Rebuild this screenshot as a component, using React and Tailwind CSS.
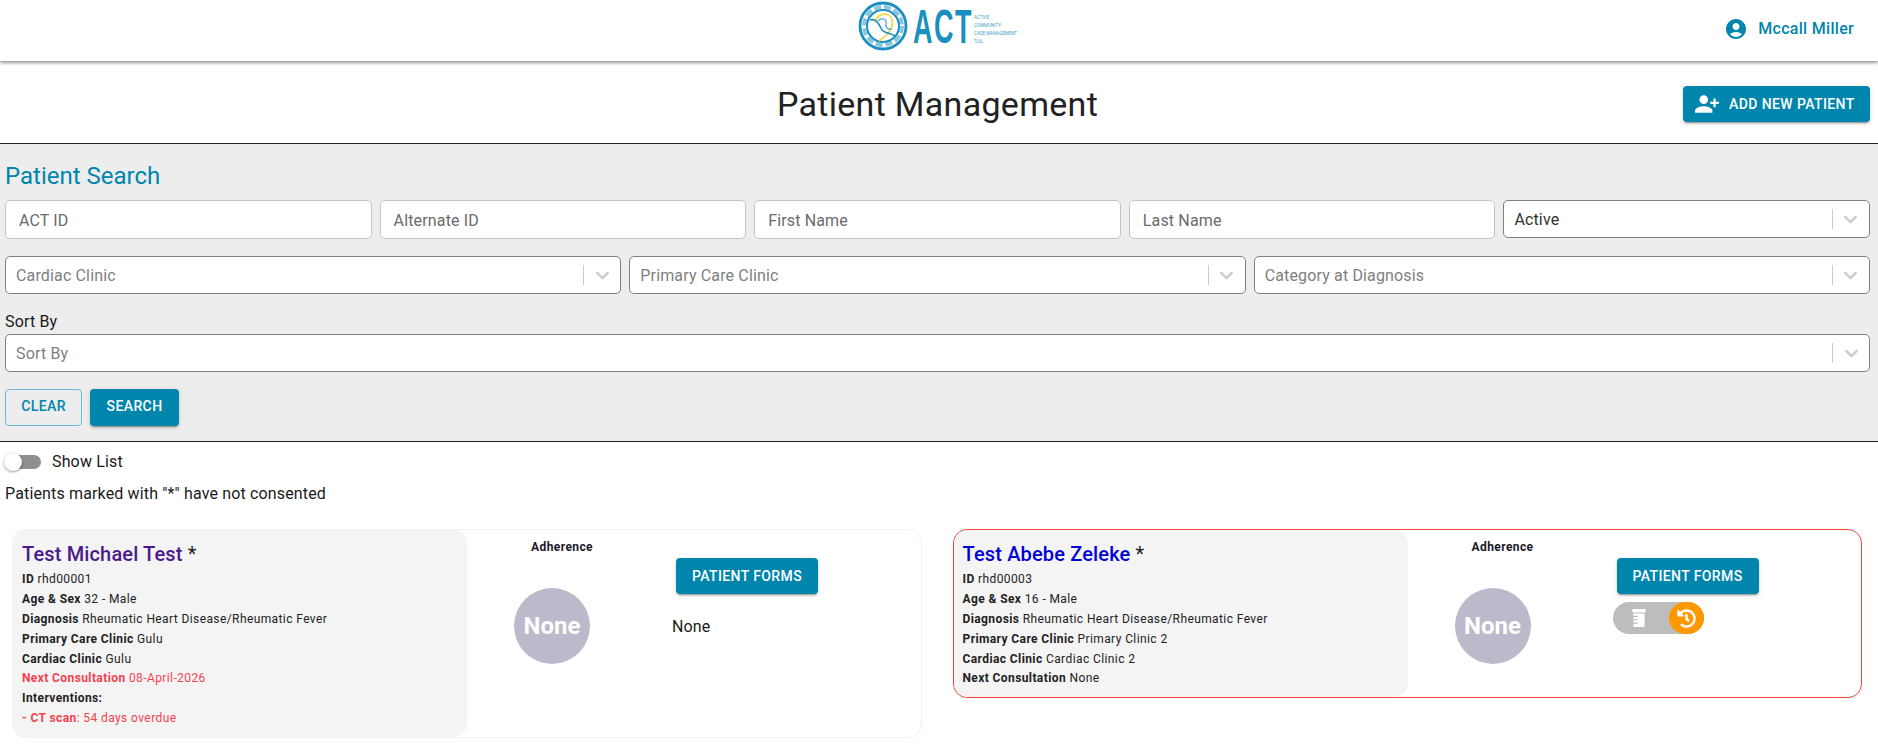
import React from "react";
import { ChevronDown } from "lucide-react";
import { MdAccountCircle, MdPersonAdd } from "react-icons/md";
import { FaHistory, FaPrescriptionBottle } from "react-icons/fa";

const btnShadow = "shadow-[0_3px_1px_-2px_rgba(0,0,0,0.2),0_2px_2px_0_rgba(0,0,0,0.14),0_1px_5px_0_rgba(0,0,0,0.12)]";

const Logo = () => (
  <svg width="160" height="52" viewBox="0 0 160 52" className="mt-[-10px] overflow-visible">
    <circle cx="24" cy="26" r="23" fill="none" stroke="#1a8fc0" strokeWidth="2.8" />
    <circle cx="24" cy="26" r="19" fill="none" stroke="#8cc6de" strokeWidth="4" strokeDasharray="7 3" />
    <circle cx="24" cy="26" r="16" fill="none" stroke="#1a8fc0" strokeWidth="2" />
    <path d="M16 22 C19 12 31 12 33 20 C35 28 27 36 20 41" fill="none" stroke="#f4d84a" strokeWidth="1.8" />
    <path d="M11 20 C17 18 20 24 23 30 C27 34 32 33 36 36" fill="none" stroke="#1a8fc0" strokeWidth="1.6" />
    <path d="M19 21 C23 17 28 19 27 24 C26 28 30 30 33 29" fill="none" stroke="#5fb2d6" strokeWidth="1.4" />
    <text x="54" y="43.5" transform="translate(54 43.5) scale(1 1.76) translate(-54 -43.5)" fontFamily="'Liberation Sans', sans-serif" fontSize="27" fontWeight="700" letterSpacing="1.5" fill="#1a8fc0">ACT</text>
    <g fontFamily="Roboto, sans-serif" fontSize="5" fill="#3f9fc8">
      <text x="115" y="19" textLength="15" lengthAdjust="spacingAndGlyphs">ACTIVE</text>
      <text x="115" y="27" textLength="27" lengthAdjust="spacingAndGlyphs">COMMUNITY</text>
      <text x="115" y="35" textLength="43" lengthAdjust="spacingAndGlyphs">CASE MANAGEMENT</text>
      <text x="115" y="43" textLength="9" lengthAdjust="spacingAndGlyphs">TOOL</text>
    </g>
  </svg>
);

const TextBox = ({ label }) => (
  <div className="flex-1 h-[39px] bg-white border border-[#c4c4c4] rounded-[5px] flex items-center text-base tracking-[0.15px] text-[#6b6b6b]">
    <span className="ml-[13px] pt-[2px]">{label}</span>
  </div>
);

const SelectBox = ({ label, active }) => (
  <div className="flex-1 h-[38px] bg-white border border-[#808080] rounded-[5px] flex items-center">
    <span className={active ? "flex-1 ml-[10px] pt-[1px] text-base tracking-[0.15px] text-[#333333]" : "flex-1 ml-[10px] pt-[1px] text-base tracking-[0.15px] text-[#808080]"}>{label}</span>
    <span className="w-px h-5 bg-[#cccccc]" />
    <span className="w-[36px] flex justify-center">
      <ChevronDown size={21} strokeWidth={2.6} className="text-[#cccccc]" />
    </span>
  </div>
);

const Info = ({ label, value, red, tight }) => (
  <div className={`h-5 text-xs leading-5 tracking-[0.4px] ${red ? "text-[#f5424f]" : "text-[#222222]"} ${tight ? "-mt-px" : ""}`}>
    <b className="font-bold">{label}</b>
    {value}
  </div>
);

const FormsButton = () => (
  <button className={`w-[142px] h-[36px] bg-[#0085ad] text-white text-sm font-medium tracking-[0.4px] rounded ${btnShadow}`}>
    PATIENT FORMS
  </button>
);

const Adherence = () => (
  <div className="w-[188px] shrink-0 flex flex-col items-center">
    <div className="mt-[9px] pl-[2px] text-xs leading-4 font-bold tracking-[0.4px] text-[#1a1a2a]">Adherence</div>
    <div className="mt-[33px] mr-[18px] w-[76px] h-[76px] rounded-full bg-[#bcb9cb] flex items-center justify-center text-white text-2xl font-bold">
      None
    </div>
  </div>
);

const PatientCard = ({ name, nameColor, border, height, children, right }) => (
  <div className={`flex-1 flex border rounded-[14px] ${height} ${border}`}>
    <div className="w-[454px] shrink-0 bg-[#f4f4f4] rounded-[14px] pl-[9px] pt-[12px]">
      <div className="text-xl leading-6 font-medium tracking-[0.15px] text-[#222222] mb-[3px]">
        <span className={nameColor}>{name}</span> <span className="font-normal">*</span>
      </div>
      {children}
    </div>
    <Adherence />
    <div className="pt-[28px] pl-[21px]">
      <FormsButton />
      {right}
    </div>
  </div>
);

export default function App() {
  return (
    <div className="w-[1878px] h-[748px] overflow-hidden bg-white font-['Roboto',sans-serif] text-[#1a1a1a]">
      {/* Header */}
      <header className="relative h-[61px] flex items-center justify-center bg-white shadow-[0_2px_3px_rgba(0,0,0,0.4)]">
        <Logo />
        <div className="absolute right-[24px] top-[17px] flex items-center gap-[10px] text-[#0085ad] text-base font-medium tracking-[0.3px]">
          <MdAccountCircle size={24} />
          Mccall Miller
        </div>
      </header>

      {/* Title */}
      <div className="relative h-[83px] flex items-center justify-center border-b border-[#222222]">
        <h1 className="text-[34px] tracking-[0.3px] mt-[5px] mr-[3px] text-[#222222]">Patient Management</h1>
        <button className={`absolute right-[8px] top-[25px] w-[187px] h-[36px] bg-[#0085ad] text-white text-sm font-medium tracking-[0.4px] rounded flex items-center pl-[11px] gap-[9px] ${btnShadow}`}>
          <MdPersonAdd size={26} className="-scale-x-100" />
          ADD NEW PATIENT
        </button>
      </div>

      {/* Search */}
      <section className="h-[298px] bg-[#ededed] border-b border-[#222222] pl-[5px] pr-[8px] pt-[16px]">
        <h2 className="text-2xl leading-8 text-[#0085ad]">Patient Search</h2>
        <div className="flex gap-2 mt-[8px]">
          <TextBox label="ACT ID" />
          <TextBox label="Alternate ID" />
          <TextBox label="First Name" />
          <TextBox label="Last Name" />
          <SelectBox label="Active" active />
        </div>
        <div className="flex gap-2 mt-[17px]">
          <SelectBox label="Cardiac Clinic" />
          <SelectBox label="Primary Care Clinic" />
          <SelectBox label="Category at Diagnosis" />
        </div>
        <div className="mt-[17px] text-base leading-[22px] tracking-[0.15px]">Sort By</div>
        <div className="flex mt-[1px]">
          <SelectBox label="Sort By" />
        </div>
        <div className="flex gap-2 mt-[17px]">
          <button className="w-[77px] h-[37px] pb-[3px] border border-[#6cb8d6] rounded text-[#0085ad] text-sm font-medium tracking-[0.4px]">CLEAR</button>
          <button className={`w-[89px] h-[37px] pb-[3px] bg-[#0085ad] text-white text-sm font-medium tracking-[0.4px] rounded ${btnShadow}`}>SEARCH</button>
        </div>
      </section>

      {/* List options */}
      <div className="pl-[5px]">
        <div className="flex items-center h-[38px] pt-[2px]">
          <div className="relative w-[36px] h-[14px] rounded-full bg-[#8e8e93]">
            <span className="absolute left-[-1px] top-[-2px] w-[18px] h-[18px] rounded-full bg-white shadow-[0_1px_3px_rgba(0,0,0,0.4)]" />
          </div>
          <span className="ml-[11px] text-base tracking-[0.15px]">Show List</span>
        </div>
        <div className="mt-[2px] text-base leading-6 tracking-[0.15px]">Patients marked with "*" have not consented</div>
      </div>

      {/* Patient cards */}
      <div className="flex gap-[31px] items-start pl-[12px] pr-[16px] mt-[23px]">
        <PatientCard name="Test Michael Test" nameColor="text-[#4b1a8a]" border="border-[#f0f0f0]" height="h-[209px]" right={<div className="mt-[21px] ml-[-4px] text-base leading-6 tracking-[0.15px]">None</div>}>
          <Info label="ID " value="rhd00001" />
          <Info label="Age & Sex " value="32 - Male" />
          <Info label="Diagnosis " value="Rheumatic Heart Disease/Rheumatic Fever" />
          <Info label="Primary Care Clinic " value="Gulu" />
          <Info label="Cardiac Clinic " value="Gulu" />
          <Info label="Next Consultation " value="08-April-2026" red tight />
          <Info label="Interventions:" value="" />
          <Info label="- CT scan" value=": 54 days overdue" red />
        </PatientCard>
        <PatientCard name="Test Abebe Zeleke" nameColor="text-[#0000d6]" border="border-[#f44336]" height="h-[169px]" right={
          <div className="relative mt-[8px] ml-[-4px] w-[91px] h-[32px] rounded-full bg-[#bdbdbb]">
            <FaPrescriptionBottle size={18} className="absolute left-[17px] top-[7px] text-white" />
            <span className="absolute right-0 top-0 w-[35px] h-[32px] rounded-full bg-[#ff9800] flex items-center justify-center">
              <FaHistory size={19} className="text-white" />
            </span>
          </div>
        }>
          <Info label="ID " value="rhd00003" />
          <Info label="Age & Sex " value="16 - Male" />
          <Info label="Diagnosis " value="Rheumatic Heart Disease/Rheumatic Fever" />
          <Info label="Primary Care Clinic " value="Primary Clinic 2" />
          <Info label="Cardiac Clinic " value="Cardiac Clinic 2" />
          <Info label="Next Consultation " value="None" tight />
        </PatientCard>
      </div>
    </div>
  );
}
